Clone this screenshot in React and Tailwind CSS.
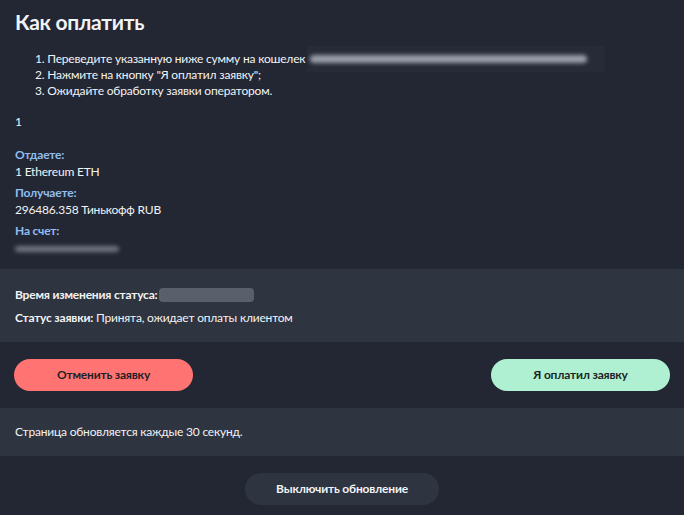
import React from "react";

/* blurred placeholder for hidden data */
const Blur = ({ className = "" }) => (
    <span className={`inline-block rounded-sm blur-[2px] ${className}`} />
);

export default function App() {
    return (
        <div
            className="w-[684px] h-[515px] overflow-hidden bg-[#222733] text-[#f2f3f5] text-[12px] leading-[16px] tracking-[-0.2px]"
            style={{ fontFamily: 'Lato, "Noto Sans", sans-serif' }}
        >
            {/* header + instructions */}
            <div className="px-[15px] pt-[8px]">
                <h1 className="text-[21px] leading-[28px] font-bold tracking-[-0.3px]">Как оплатить</h1>

                <ol className="mt-[15px] pl-[20px]">
                    <li className="flex items-center h-[16px]">
                        <span>1. Переведите указанную ниже сумму на кошелек</span>
                        <span className="ml-[2px] h-[26px] pl-[3px] pr-[18px] bg-[#262b37] flex items-center">
                            <Blur className="w-[277px] h-[8px] bg-[#9a9fab]" />
                        </span>
                    </li>
                    <li>2. Нажмите на кнопку "Я оплатил заявку";</li>
                    <li>3. Ожидайте обработку заявки оператором.</li>
                </ol>

                <p className="mt-[15px]">1</p>

                <div className="mt-[17px] space-y-[5px]">
                    <div className="space-y-[1px]">
                        <p className="text-[#93bdf0] font-bold">Отдаете:</p>
                        <p>1 Ethereum ETH</p>
                    </div>
                    <div className="space-y-[1px]">
                        <p className="text-[#93bdf0] font-bold">Получаете:</p>
                        <p>296486.358 Тинькофф RUB</p>
                    </div>
                    <div className="space-y-[2px]">
                        <p className="text-[#93bdf0] font-bold">На счет:</p>
                        <p className="h-[16px] flex items-center">
                            <Blur className="w-[104px] h-[6px] bg-[#6f7480]" />
                        </p>
                    </div>
                </div>
            </div>

            {/* status panel */}
            <div className="mt-[12px] bg-[#2e3440] px-[15px] pt-[18px] pb-[16px] space-y-[7px]">
                <p className="flex items-center">
                    <span className="font-bold">Время изменения статуса:</span>
                    <span className="ml-[2px] inline-block w-[95px] h-[14px] bg-[#5a606b] rounded-sm" />
                </p>
                <p>
                    <span className="font-bold">Статус заявки:</span> Принята, ожидает оплаты клиентом
                </p>
            </div>

            {/* actions */}
            <div className="px-[14px] py-[17px] flex justify-between">
                <button className="w-[179px] h-[32px] rounded-full bg-[#ff7473] text-[#1d1f25] font-bold">
                    Отменить заявку
                </button>
                <button className="w-[179px] h-[32px] rounded-full bg-[#aef0d1] text-[#1d1f25] font-bold">
                    Я оплатил заявку
                </button>
            </div>

            {/* refresh note */}
            <div className="bg-[#2e3440] px-[15px] py-[16px]">
                <p>Страница обновляется каждые 30 секунд.</p>
            </div>

            <div className="flex justify-center pt-[17px]">
                <button className="w-[194px] h-[32px] rounded-full bg-[#2e3440] font-bold">
                    Выключить обновление
                </button>
            </div>
        </div>
    );
}
